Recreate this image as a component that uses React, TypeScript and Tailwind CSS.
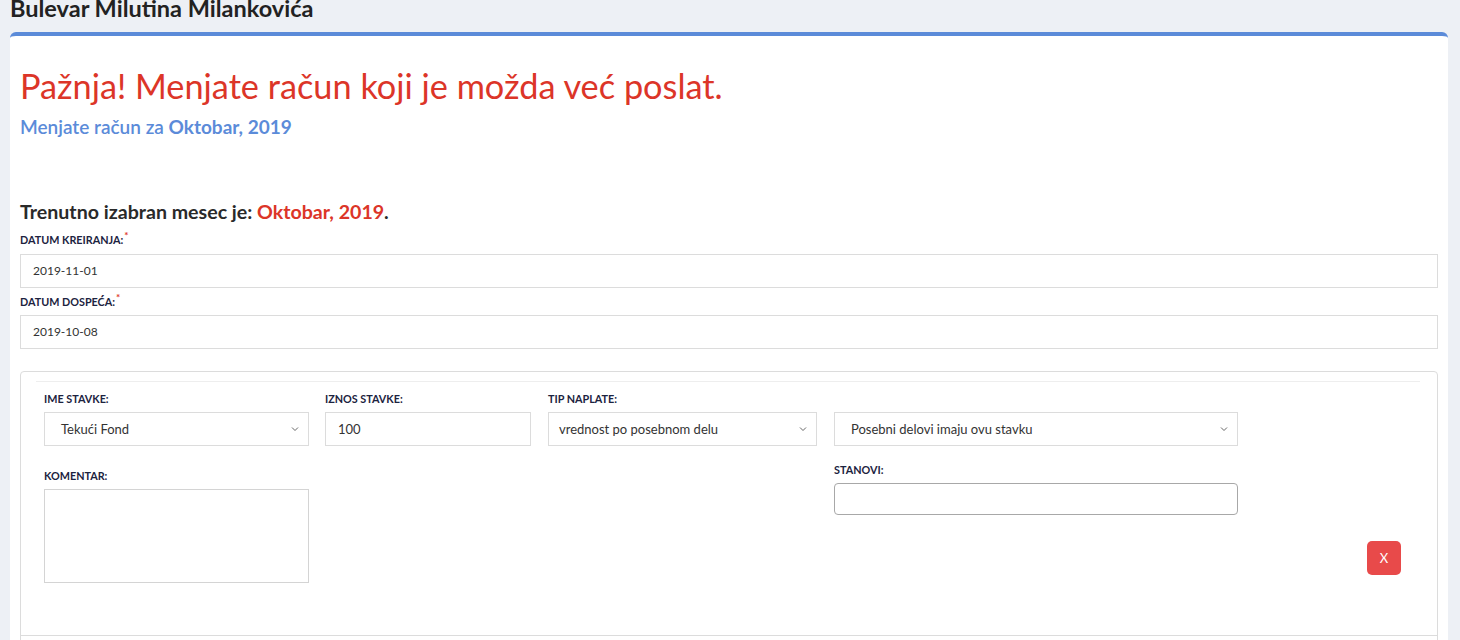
import React from "react";

const font = { fontFamily: "Lato, 'Noto Sans', sans-serif" };

function Label({ text, required }: { text: string; required?: boolean }) {
  return (
    <div className="text-[10.8px] font-bold uppercase text-[#1c2340] leading-none">
      {text}
      {required && <sup className="text-[#e0392b] ml-[1px] text-[10px]">*</sup>}
    </div>
  );
}

function Chevron() {
  return (
    <svg width="10" height="10" viewBox="0 0 10 10" className="text-[#555]">
      <path d="M2 3.5 L5 6.5 L8 3.5" fill="none" stroke="currentColor" strokeWidth="0.9" />
    </svg>
  );
}

function SelectBox({ value, width, pad = "pl-4" }: { value: string; width: string; pad?: string }) {
  return (
    <div
      className={`${width} h-[34px] border border-[#dcdcdc] bg-white flex items-center justify-between ${pad} pr-2 text-[13px] text-[#333]`}
    >
      <span>{value}</span>
      <Chevron />
    </div>
  );
}

export default function App() {
  return (
    <div className="bg-[#edf0f5] w-[1460px] h-[640px] overflow-hidden" style={font}>
      <div className="flex px-[10px] h-[32px]">
        <h1 className="text-[23.5px] font-bold text-[#222] leading-none -mt-[3px]">
          Bulevar Milutina Milankovića
        </h1>
      </div>
      <div className="mx-[10px] mr-[12px] bg-white border-t-4 border-[#5b8bd9] rounded-t-md px-[10px] pb-4 h-[700px]">
        <div className="pt-[33px] text-[34.3px] text-[#dc3528] leading-none">
          Pažnja! Menjate račun koji je možda već poslat.
        </div>
        <div className="mt-[14px] text-[19px] font-semibold text-[#5b8bd9] leading-none">
          Menjate račun za <span className="font-bold">Oktobar, 2019</span>
        </div>
        <div className="mt-[66px] text-[19.6px] font-bold text-[#2a2a2a] leading-none">
          Trenutno izabran mesec je: <span className="text-[#dc3528]">Oktobar, 2019</span>.
        </div>
        <div className="mt-[13px]">
          <Label text="Datum kreiranja:" required />
        </div>
        <div className="mt-[8px] h-[34px] border border-[#dcdcdc] flex items-center px-3 text-[12px] text-[#333]">
          2019-11-01
        </div>
        <div className="mt-[9px]">
          <Label text="Datum dospeća:" required />
        </div>
        <div className="mt-[8px] h-[34px] border border-[#dcdcdc] flex items-center px-3 text-[12px] text-[#333]">
          2019-10-08
        </div>
        <div className="mt-[22px] border border-[#dcdcdc] rounded-[4px] px-[15px] pt-[9px] h-[300px]">
          <div className="border-t border-[#eeeeee] mr-[2px]" />
          <div className="px-[8px] pt-[12px]">
            <div className="flex">
              <div className="flex flex-col gap-[7px]">
                <Label text="Ime stavke:" />
                <SelectBox value="Tekući Fond" width="w-[265px]" />
              </div>
              <div className="flex flex-col gap-[7px] ml-[16px]">
                <Label text="Iznos stavke:" />
                <div className="w-[206px] h-[34px] border border-[#dcdcdc] flex items-center px-3 text-[13px] text-[#333]">
                  100
                </div>
              </div>
              <div className="flex flex-col gap-[7px] ml-[17px]">
                <Label text="Tip naplate:" />
                <SelectBox value="vrednost po posebnom delu" width="w-[269px]" pad="pl-[10px]" />
              </div>
              <div className="flex flex-col gap-[7px] ml-[17px]">
                <div className="h-[11px]" />
                <SelectBox value="Posebni delovi imaju ovu stavku" width="w-[404px]" pad="pl-4" />
              </div>
            </div>
            <div className="flex mt-[19px]">
              <div className="flex flex-col gap-[7px] pt-[6px]">
                <Label text="Komentar:" />
                <div className="w-[265px] h-[94px] border border-[#d4d4d4]" />
              </div>
              <div className="ml-[525px] flex flex-col gap-[7px]">
                <Label text="Stanovi:" />
                <div className="w-[404px] h-[32px] border border-[#a8a8a8] rounded-[4px]" />
              </div>
            </div>
          </div>
          <div className="flex justify-end pr-[21px] -mt-[42px]">
            <button className="w-[34px] h-[34px] rounded-[5px] bg-[#e84a4a] text-white text-[13px]">X</button>
          </div>
          <div className="mt-[60px] border-t border-[#dcdcdc] -mx-[15px]" />
        </div>
      </div>
    </div>
  );
}
